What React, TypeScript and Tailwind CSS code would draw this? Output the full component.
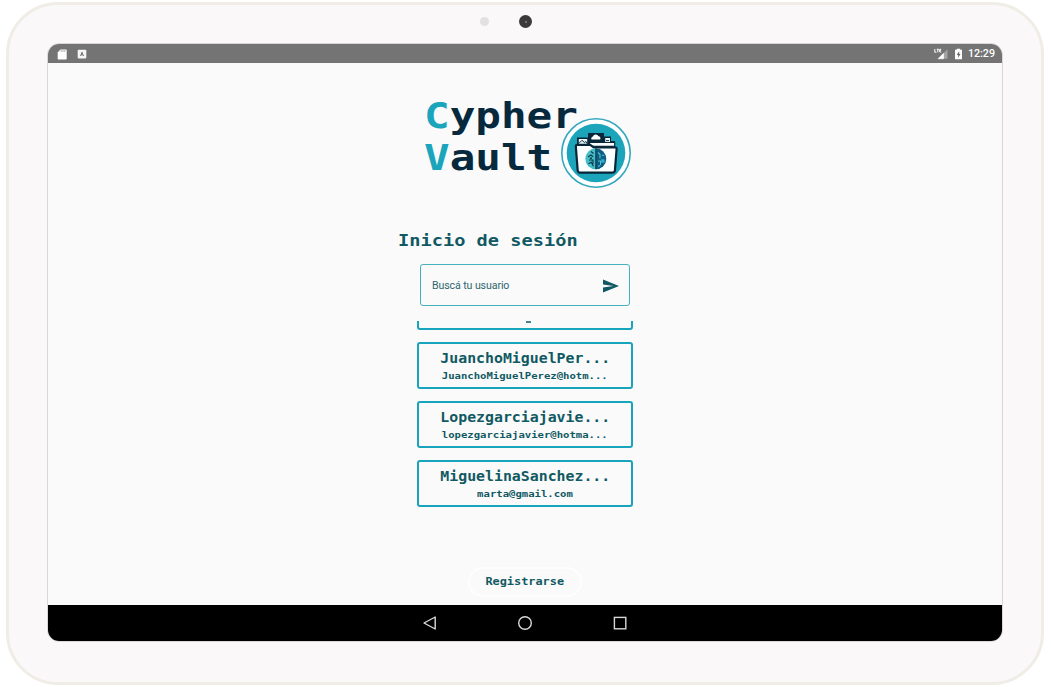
import React from 'react';

const mono = "font-['DejaVu_Sans_Mono',monospace] font-bold whitespace-pre";

const users = [
  { name: 'JuanchoMiguelPer...', email: 'JuanchoMiguelPerez@hotm...' },
  { name: 'Lopezgarciajavie...', email: 'lopezgarciajavier@hotma...' },
  { name: 'MiguelinaSanchez...', email: 'marta@gmail.com' },
];

function StatusBar() {
  return (
    <div className="flex h-[19px] shrink-0 items-center justify-between bg-[#747474] pt-px pr-[7px] pl-[9px] text-white">
      <div className="flex items-center gap-[10px]">
        <svg width="10" height="11" viewBox="0 0 10 11">
          <path d="M3.4 .5H9a.7.7 0 0 1 .7.7v8.6a.7.7 0 0 1-.7.7H1.4a.7.7 0 0 1-.7-.7V3.4z" fill="#fff" />
          <path d="M4.2 1.2v1.6M6 1.2v1.6M7.8 1.2v1.6" stroke="#8a8a8a" strokeWidth=".8" />
        </svg>
        <svg width="10" height="10" viewBox="0 0 10 10">
          <rect x=".7" y=".8" width="8.6" height="8.6" rx=".8" fill="#f5f5f5" />
          <path d="M3.5 7 5 3.2 6.5 7M4 5.8h2" stroke="#777" strokeWidth="1" fill="none" />
        </svg>
      </div>
      <div className="flex items-center">
        <svg width="15" height="12" viewBox="0 0 15 12">
          <path d="M13.5 1.2v9.6H4z" fill="#a3a3a3" />
          <path d="M9.6 5.2v5.6H4z" fill="#fff" stroke="#fff" strokeWidth=".5" />
          <path d="M.8 1v3.2h1.6M2.7 1.3h2.2M3.8 1.3v3M7.2 1.3H5.7V4h1.5M5.7 2.6h1.2" stroke="#fff" strokeWidth="1" fill="none" />
        </svg>
        <svg className="ml-[5px]" width="9" height="12" viewBox="0 0 9 12">
          <path d="M2.8.7h3.4v1H8v9.6H1V1.7h1.8z" fill="#fff" />
          <path d="M5.2 3.2 2.7 6.9h1.5v2.8L6.5 6H5.2z" fill="#666" />
        </svg>
        <span className="ml-[5px] font-['Roboto',sans-serif] text-[10.7px] leading-none font-medium">12:29</span>
      </div>
    </div>
  );
}

function VaultBadge() {
  return (
    <svg className="absolute top-[54px] left-[512px]" width="72" height="72" viewBox="0 0 72 72">
      <circle cx="36" cy="36" r="34.2" fill="#fcfeff" stroke="#35a7bd" strokeWidth="1.6" />
      <circle cx="36" cy="36" r="29.3" fill="#1ca4bb" />
      <path d="M17 30v-9.5h11V16h16v3.5h7V24h4v11H17z" fill="#082638" />
      <path d="M18.8 22h8.4v5.5h-8.4zM45.2 21h4.8v4.5h-4.8z" fill="#e9f9fb" />
      <path d="m19 26.3 3-3 2.4 2.2 1.4-1 1.4 2.3M46 23.6h3" stroke="#082638" strokeWidth="1" fill="none" />
      <path d="M31.6 22.6a2 2 0 0 1 1.3-3.1 3 3 0 0 1 5.6-.2 2.1 2.1 0 0 1 1.6 3.3z" fill="#fff" />
      <path d="M29.5 25.5h25.2v3.7H29.5z" fill="#f9fdfe" stroke="#082638" strokeWidth="1.1" />
      <path d="M15.8 29.3q0-1.4 1.4-1.4h13l3.5 2.4h21.1q2 0 1.8 1.8l-1.7 21.4q-.2 2.1-2.3 2.1H20q-2.1 0-2.3-2.1z" fill="#fcffff" stroke="#082638" strokeWidth="2.2" />
      <path d="M35.8 31.3a10.5 10.5 0 0 0 0 21z" fill="#44bdc5" />
      <path d="M35.8 31.3a10.5 10.5 0 0 1 0 21z" fill="#0d5c82" />
      <path d="M35.8 31.3v21M28 40l3-2 2.2 1.8M29 43h4v4M28.4 46.7l3-1.5 2 4M31 34.5l2.5 2" stroke="#09374d" strokeWidth="1.1" fill="none" />
      <path d="m38 35.5 2 2v4M44.3 38.2h-2.5M38 44h2.5v4M38 49.5l2-1" stroke="#53c3d1" strokeWidth="1.1" fill="none" />
      <path d="M41.2 42.2h3.3v3.5h-3.3z" fill="#28b2c9" />
      <circle cx="31" cy="41.3" r="1" fill="#09374d" />
    </svg>
  );
}

function UserCard({ name, email }: { name: string; email: string }) {
  return (
    <li className="flex h-[47px] w-[216px] shrink-0 flex-col items-center rounded-[3px] border-2 border-[#18a4bc] pt-[4px] text-[#105963]">
      <span className={`${mono} scale-x-[1.085] text-[13.7px] leading-[20px]`}>{name}</span>
      <span className={`${mono} scale-x-[1.14] text-[9.3px] leading-[16px]`}>{email}</span>
    </li>
  );
}

function NavBar() {
  return (
    <nav className="flex h-[36px] shrink-0 items-center justify-center gap-[79px] bg-black">
      <svg width="16" height="16" viewBox="0 0 16 16" fill="none" stroke="#d8d8d8" strokeWidth="1.4" strokeLinejoin="round">
        <path d="M13.2 2v12L2 8z" />
      </svg>
      <svg width="16" height="16" viewBox="0 0 16 16" fill="none" stroke="#d8d8d8" strokeWidth="1.4">
        <circle cx="8" cy="8" r="6.3" />
      </svg>
      <svg width="16" height="16" viewBox="0 0 16 16" fill="none" stroke="#d8d8d8" strokeWidth="1.4">
        <rect x="2.4" y="2.4" width="11.4" height="11.4" />
      </svg>
    </nav>
  );
}

export default function App() {
  return (
    <div className="h-[687px] w-[1051px] overflow-hidden bg-white pt-[2px] pl-[6px]">
      <div className="relative flex h-[683px] w-[1038px] flex-col items-center rounded-[52px] border-[3px] border-[#efede5] bg-[#faf8f9]">
        <div className="absolute top-[12px] left-[471px] size-[9px] rounded-full bg-[#e2e1e1]" />
        <div className="absolute top-[10px] left-[510px] flex size-[13px] items-center justify-center rounded-full bg-[#3b393a]">
          <div className="size-[2px] rounded-full bg-[#858384]" />
        </div>

        <div className="mt-[38px] h-[599px] w-[956px] rounded-[12px] border border-[#d9d8d8]">
          <div className="flex h-full flex-col overflow-hidden rounded-[11px] bg-[#fafafa]">
            <StatusBar />
            <main className="flex min-h-0 flex-1 flex-col">
              <header className="relative h-[166px] shrink-0 pt-[32px] pl-[376px]">
                <h1 className={`${mono} w-fit origin-left scale-x-[1.2] text-[35.5px] leading-[42px] text-[#06293d]`}>
                  <div><span className="text-[#1ba5bc]">C</span>ypher</div>
                  <div><span className="text-[#1ba5bc]">V</span>ault</div>
                </h1>
                <VaultBadge />
              </header>
              <h2 className={`${mono} mt-px ml-[350px] w-fit origin-left scale-x-[1.13] text-[16.5px] leading-[22px] text-[#105963]`}>Inicio de sesión</h2>
              <div className="mt-[12px] ml-[372px] flex h-[42px] w-[210px] shrink-0 items-center justify-between rounded-[3px] border border-[#47b0bd] pt-px pr-[9px] pl-[11px]">
                <span className="font-['Roboto',sans-serif] text-[10.6px] tracking-[-0.1px] text-[#2b666e]">Buscá tu usuario</span>
                <svg width="18" height="16" viewBox="0 0 18 16">
                  <path d="M1 1.4 17 8 1 14.6V9.4L11.5 8 1 6.6z" fill="#105963" />
                </svg>
              </div>
              <ul className="mt-[15px] ml-[369px] flex h-[199px] w-[216px] shrink-0 flex-col justify-end gap-[12px] overflow-hidden pb-[13px]">
                <li className="flex h-[47px] shrink-0 flex-col items-center rounded-[3px] border-2 border-[#18a4bc]">
                  <div className="mt-[36px] ml-[6px] h-[2px] w-[5px] shrink-0 bg-[#47838a]" />
                </li>
                {users.map((user) => <UserCard key={user.email} {...user} />)}
              </ul>
              <button className="mt-[47px] ml-[420px] flex h-[30px] w-[114px] shrink-0 items-center justify-center rounded-full border-2 border-[#fefefe] text-[#105963]">
                <span className={`${mono} scale-x-[1.07] text-[11.1px]`}>Registrarse</span>
              </button>
            </main>
            <NavBar />
          </div>
        </div>
      </div>
    </div>
  );
}
